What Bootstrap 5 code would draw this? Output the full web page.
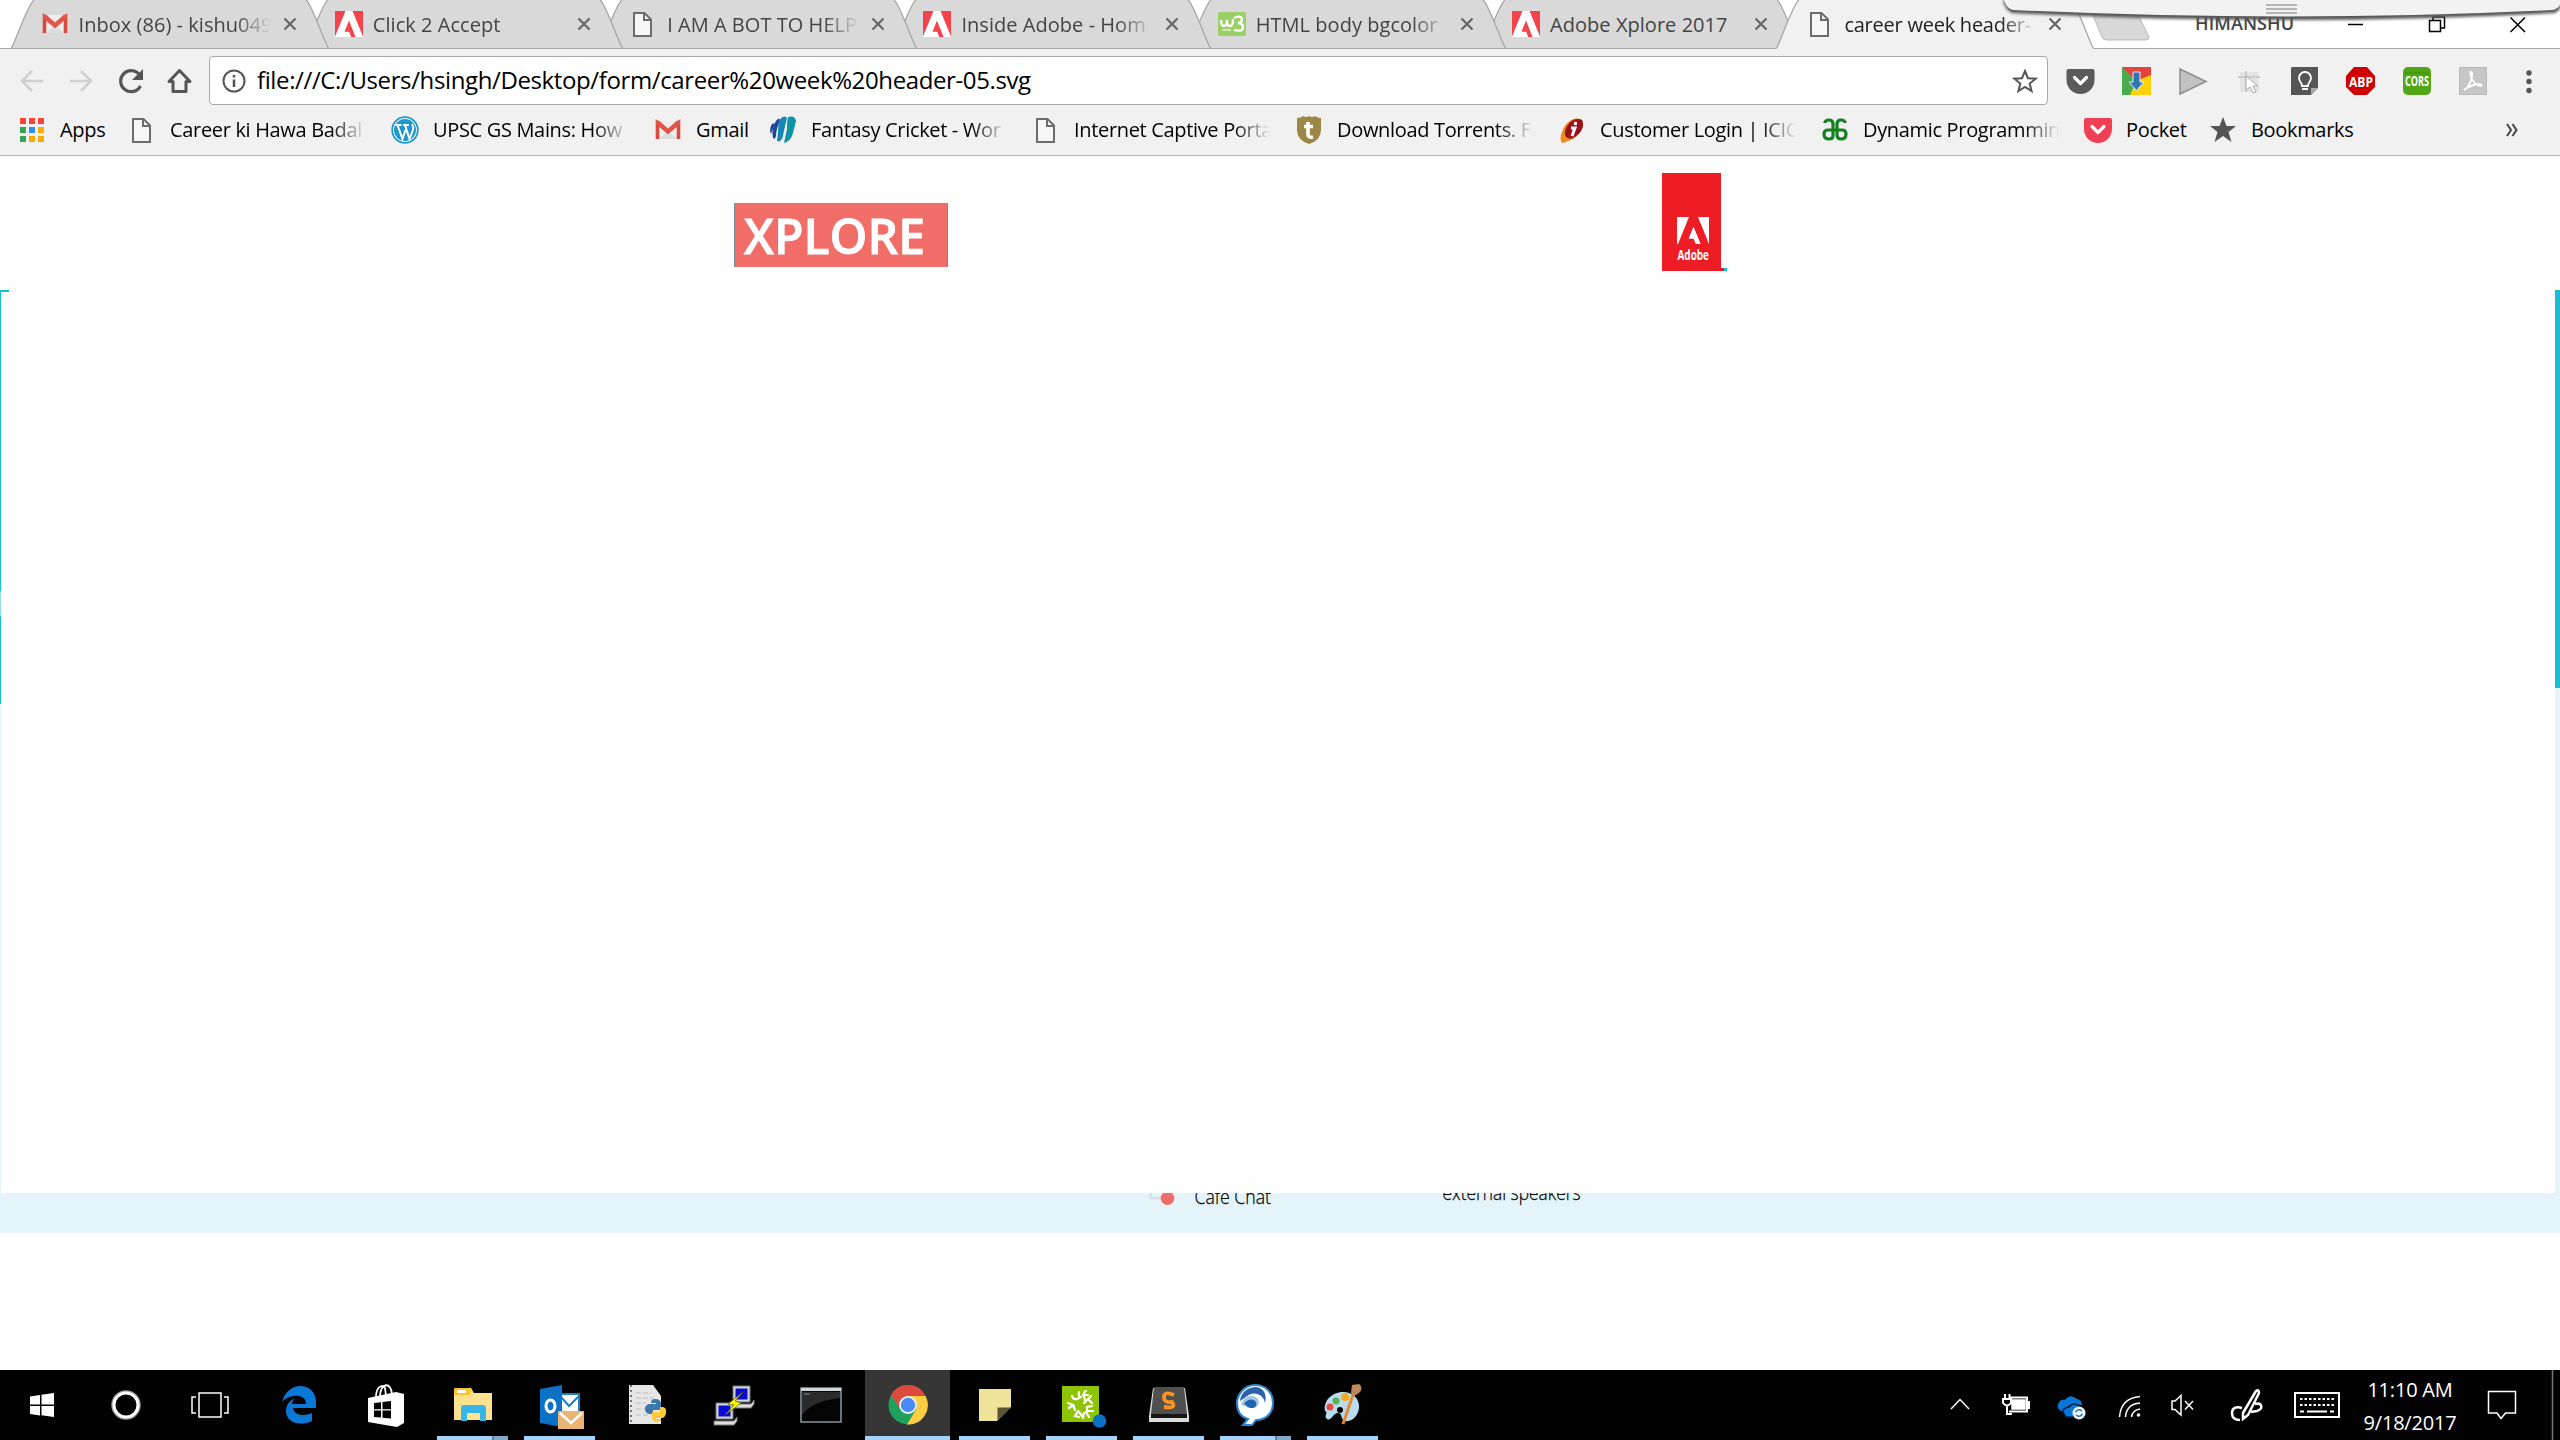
<!DOCTYPE html>
<html lang="en">
<head>
<meta charset="utf-8">
<title>career week header-05.svg</title>
<link rel="stylesheet" href="https://cdn.jsdelivr.net/npm/bootstrap@5.3.0/dist/css/bootstrap.min.css">
<style>
body{width:2560px;height:1440px;overflow:hidden;font-family:"Open Sans","Noto Sans",sans-serif;font-size:20px;line-height:28px;color:#000;background:#fefefe}
svg{display:block;flex:none}
.strip{height:48px;padding-left:10.500px;background:#fff;position:relative}
.tb{width:318px;height:48px;margin-right:-23.7px;padding:0 29px 0 30px;position:relative;color:#444;letter-spacing:.04px;z-index:1}
.tb>*{position:relative}
.tb>.shape{position:absolute;left:0;top:0}
.tb:nth-child(1){z-index:7}
.tb:nth-child(2){z-index:6}
.tb:nth-child(3){z-index:5}
.tb:nth-child(4){z-index:4}
.tb:nth-child(5){z-index:3}
.tb:nth-child(6){z-index:2}
.tb.on{color:#222;z-index:8;letter-spacing:-.24px}
.ticon{width:28px;height:28px;margin-right:10px}
.fade-txt{white-space:nowrap;overflow:hidden;-webkit-mask-image:linear-gradient(90deg,#000 calc(100% - 36px),transparent);mask-image:linear-gradient(90deg,#000 calc(100% - 36px),transparent)}
.tb .tt{width:192px;margin-right:12px;padding-top:1px}
.tb .tt,.bm .bt{flex:none}
.user{position:absolute;left:2195px;top:11px;font-size:18px;line-height:24px;font-weight:600;color:#444;letter-spacing:.1px}
.wbtn{position:absolute;left:2340px;top:10px}
.newtab{position:absolute;left:2088px;top:0}
.pull{position:absolute;left:2000px;top:0;z-index:9}
.tools{height:108px;background:#f1f1f1;border-top:1px solid #a9a9a9;border-bottom:1px solid #b3b3b3}
.nav-row{height:63px;padding:0 0 0 18px}
.omni{width:1839px;height:49px;border:1.5px solid #a9a9a9;border-radius:4px;background:#fff;padding-left:12px;padding-right:9px;margin-left:15px}
.url{font-size:24px;letter-spacing:-.38px;margin-left:11px;line-height:32px;padding-bottom:1px}
.bm-row{height:36px;padding-left:18px}
.bm{letter-spacing:-.33px;flex:none}
.bm .bi{width:28px;height:28px;margin-right:14px}
.bm.full{width:263px}
.bm.full .bt{width:196px}
.w-apps{width:110px}
.w-gmail{width:115px}
.w-pocket{width:125px}
.more{margin-right:41px}
.art{height:1214px}
.task{height:70px;background:#020202;color:#fff}
.slot{width:84px;height:70px;display:flex;align-items:center;justify-content:center;position:relative;flex:none}
.app{width:87px;padding-right:2px}
.app.run::after{content:"";position:absolute;left:7px;bottom:0;width:71px;height:4px;background:#a3d3fd}
.app.multi::after{background:linear-gradient(90deg,#a3d3fd 55px,#5f7f9c 55px,#5f7f9c 57px,#84a8c8 57px)}
.app.cur{background:linear-gradient(90deg,#363636 85px,transparent 85px)}
.app.cur::after{left:0;width:85px}
.clock{font-size:20px;line-height:33px;letter-spacing:-.2px;width:116px;margin-left:-8px;padding-top:3px}
</style>
<script src="https://cdn.jsdelivr.net/npm/bootstrap@5.3.0/dist/js/bootstrap.bundle.min.js"></script>
</head>
<body>
<svg width="0" height="0" class="position-absolute">
<symbol id="tab" viewBox="0 0 318 48"><path d="M0 48C5 42 17 4 23 0H295C301 4 313 42 318 48Z" fill="#d9d9d9"/><path d="M.5 48C5 40 17 4 23 0M295 0C301 4 313 42 317.500 48" fill="none" stroke="#a6a6a6" stroke-width="1.300"/></symbol>
<symbol id="tabon" viewBox="0 0 318 49"><path d="M0 49C5 42 17 4 23 0H295C301 4 313 42 318 49Z" fill="#f1f1f1"/><path d="M.5 48.500C5 40 17 4 23 0M295 0C301 4 313 42 317.500 48.500" fill="none" stroke="#a6a6a6" stroke-width="1.300"/></symbol>
<symbol id="gm" viewBox="0 0 28 28"><path d="M2 5h24v18H2z" fill="#eee"/><path d="M5 23l9-8 9 8z" fill="#ddd"/><path d="M3.500 23V7L14 16 24.500 7v16" fill="none" stroke="#d9493c" stroke-width="3.600"/><path d="M2 5l3-.5 9 8 9-8 3 .5v3L14 18 2 8z" fill="#e0564a"/></symbol>
<symbol id="ad" viewBox="0 0 28 26"><path d="M0 0h28v26H0z" fill="#fff"/><path d="M0 0h10.500L0 25.500zM17.500 0H28v25.500zM14 9.500L20.500 26h-4.300l-2-5.300H9.500z" fill="#f4434a"/></symbol>
<symbol id="pg" viewBox="0 0 28 28"><path d="M5 3h10.500L22 9.500V26H5z" fill="#f6f6f6" stroke="#6c6c6c" stroke-width="2"/><path d="M15 3v7h7" fill="none" stroke="#6c6c6c" stroke-width="2"/></symbol>
<symbol id="x" viewBox="0 0 14 14"><path d="M1.500 1.500l11 11M12.500 1.500l-11 11" stroke="#666" stroke-width="2.200"/></symbol>
<symbol id="pocket" viewBox="0 0 28 25"><path d="M2 0h24q2 0 2 2v9a14 14 0 0 1-28 0V2q0-2 2-2z" fill="currentColor"/><path d="M8 8.500l6 6 6-6" fill="none" stroke="#fff" stroke-width="3.200" stroke-linecap="round" stroke-linejoin="round"/></symbol>
</svg>

<header>
<div class="strip d-flex">
 <div class="tb d-flex align-items-center"><svg class="shape" width="318" height="48"><use href="#tab"/></svg><svg class="ticon"><use href="#gm"/></svg><span class="tt fade-txt">Inbox (86) - kishu0493</span><svg width="14" height="14"><use href="#x"/></svg></div>
 <div class="tb d-flex align-items-center"><svg class="shape" width="318" height="48"><use href="#tab"/></svg><svg class="ticon"><use href="#ad" width="28" height="26" y="1"/></svg><span class="tt fade-txt">Click 2 Accept</span><svg width="14" height="14"><use href="#x"/></svg></div>
 <div class="tb d-flex align-items-center"><svg class="shape" width="318" height="48"><use href="#tab"/></svg><svg class="ticon"><use href="#pg"/></svg><span class="tt fade-txt">I AM A BOT TO HELP</span><svg width="14" height="14"><use href="#x"/></svg></div>
 <div class="tb d-flex align-items-center"><svg class="shape" width="318" height="48"><use href="#tab"/></svg><svg class="ticon"><use href="#ad" width="28" height="26" y="1"/></svg><span class="tt fade-txt">Inside Adobe - Hom</span><svg width="14" height="14"><use href="#x"/></svg></div>
 <div class="tb d-flex align-items-center"><svg class="shape" width="318" height="48"><use href="#tab"/></svg><svg class="ticon" viewBox="0 0 28 28"><rect y="2" width="28" height="24" rx="2" fill="#9bd067"/><path d="M3 10q0 6 3 6t3-6q0 6 3 6t3-7M16 8q7-3 8 1 0 4-4 4 5 0 5 4.500T16 20" fill="none" stroke="#fff" stroke-width="2.300"/><path d="M4 20h9" stroke="#dff2cc" stroke-width="1.500"/></svg><span class="tt fade-txt">HTML body bgcolor</span><svg width="14" height="14"><use href="#x"/></svg></div>
 <div class="tb d-flex align-items-center"><svg class="shape" width="318" height="48"><use href="#tab"/></svg><svg class="ticon"><use href="#ad" width="28" height="26" y="1"/></svg><span class="tt">Adobe Xplore 2017</span><svg width="14" height="14"><use href="#x"/></svg></div>
 <div class="tb on d-flex align-items-center"><svg class="shape" width="318" height="49"><use href="#tabon"/></svg><svg class="ticon"><use href="#pg"/></svg><span class="tt fade-txt">career week header-</span><svg width="14" height="14"><use href="#x"/></svg></div>
 <svg class="newtab" width="64" height="42"><path d="M2 8H47L61 37q0 3-3 3H19q-4 0-5-3z" fill="#d8d8d8" stroke="#bbb"/></svg>
 <span class="user">HIMANSHU</span>
 <svg class="wbtn" width="200" height="28" fill="none" stroke="#000" stroke-width="1.500"><path d="M8 14.500h15M89.500 10.500h11v11h-11zM93 10V7h11.500v11H101M170.500 7.500l14.500 14.500M185 7.500l-14.500 14.500"/></svg>
 <svg class="pull" width="560" height="28"><defs><filter id="soft" x="-5%" y="-50%" width="110%" height="200%"><feGaussianBlur stdDeviation="1.500"/></filter></defs><path d="M3 0Q5 10 12 13Q290 27 555 13L560 9V0Z" fill="#555" filter="url(#soft)"/><path d="M4 0Q6 8 13 10Q290 23 553 10Q559 8 560 4V0Z" fill="#f2f2f2"/><path d="M266 5h31M266 9h31M266 13h31" stroke="#b5b5b5" stroke-width="2"/></svg>
</div>
<div class="tools">
 <div class="nav-row d-flex align-items-center">
  <svg width="176" height="32" fill="none"><g stroke="#d0d0d0" stroke-width="2.500"><path d="M14 6L4 16l10 10M4 16h21M63 6l10 10-10 10M73 16H52"/></g><path d="M122 10.500A10.500 10.500 0 1 0 122.500 21" stroke="#555" stroke-width="3.200"/><path d="M125 4v11h-11z" fill="#555"/><path d="M161.500 5.500L172 16.500H168V26.500H155V16.500H151Z" stroke="#555" stroke-width="3" stroke-linejoin="round"/></svg>
  <div class="omni d-flex align-items-center"><svg width="24" height="24"><circle cx="12" cy="12" r="10.500" fill="none" stroke="#555" stroke-width="2"/><path d="M12 10.500V18M12 6v2.600" stroke="#555" stroke-width="2.500"/></svg><span class="url">file:///C:/Users/hsingh/Desktop/form/career%20week%20header-05.svg</span><svg class="ms-auto" width="26" height="26"><path d="M13 3l3 7.200 7.600.5-5.900 4.800 1.900 7.500L13 18.900 6.400 23l1.900-7.500L2.400 10.700l7.600-.5z" fill="none" stroke="#555" stroke-width="2"/></svg></div>
  <svg width="490" height="40" class="ms-2" viewBox="2056 0 490 40"><svg x="2066" y="8" width="29" height="25" color="#5b5b5b"><use href="#pocket"/></svg>
   <path d="M2122 6h29v11l-15 3z" fill="#e8423f"/><path d="M2122 6l14 14-4 14h-10z" fill="#48ab4c"/><path d="M2151 12v22h-21l7-15z" fill="#fdd20a"/><path d="M2122 6h29v8l-15 6z" fill="#e8423f"/><path d="M2133 11h7v10h4l-7.500 8.500-7.500-8.500h4z" fill="#2f76b8" stroke="#e8eef4"/>
   <path d="M2180 8l26 12.500L2180 33z" fill="#c2c2c2" stroke="#8e8e8e" stroke-width="1.500"/>
   <path d="M2240 11h19v20h-19z" fill="#e4e4e4"/><path d="M2238 16h22M2246 10v21" stroke="#ccc" stroke-width="2"/><path d="M2246 15l12 10h-5l3 6-3 1-3-6-4 3z" fill="#fff" stroke="#aaa"/>
   <path d="M2292 6h26v21l-7 7h-20V7z" fill="#555"/><path d="M2318 27h-7v7z" fill="#aaa"/><path d="M2302 25c0-4-3-4-3-8a6 6 0 0 1 12 0c0 4-3 4-3 8zM2302 28h6" fill="none" stroke="#fff" stroke-width="1.800"/>
   <path d="M2354 6h13l8 9v11l-8 8h-13l-8-8V15z" fill="#d00000"/><text x="2349" y="26" font-size="15" font-weight="700" fill="#fff" textLength="24" lengthAdjust="spacingAndGlyphs">ABP</text>
   <rect x="2403" y="6" width="28" height="28" rx="5" fill="#50a616"/><path d="M2405 12h24" stroke="#3d8e0c"/><text x="2405" y="25" font-size="14" font-weight="700" fill="#fff" textLength="24" lengthAdjust="spacingAndGlyphs">CORS</text>
   <path d="M2459.500 6.500h27v27h-27z" fill="#c6c6c6" stroke="#b8b8b8"/><path d="M2464 29c3-1 9-10 8-17-1-3-3 0-1 4 2 5 6 9 10 9 3-2-6-4-17 4z" fill="none" stroke="#fff" stroke-width="1.800"/>
   <g fill="#555"><circle cx="2529" cy="12" r="2.700"/><circle cx="2529" cy="20.500" r="2.700"/><circle cx="2529" cy="29.500" r="2.700"/></g></svg>
 </div>
 <div class="bm-row d-flex align-items-center">
  <div class="bm w-apps d-flex align-items-center"><svg class="bi"><g fill="#fb4236"><path d="M2 2h6v6H2zM11 2h6v6h-6zM20 2h6v6h-6z"/></g><path d="M2 11h6v6H2z" fill="#34a352"/><path d="M11 11h6v6h-6z" fill="#2d8cff"/><path d="M20 11h6v6h-6zM11 20h6v6h-6zM20 20h6v6h-6z" fill="#fba905"/><path d="M2 20h6v6H2z" fill="#34a352"/></svg><span>Apps</span></div>
  <div class="bm full d-flex align-items-center"><svg class="bi"><use href="#pg"/></svg><span class="bt fade-txt">Career ki Hawa Badal</span></div>
  <div class="bm full d-flex align-items-center"><svg class="bi"><circle cx="14" cy="14" r="12.800" fill="#fff" stroke="#1d98cc" stroke-width="1.800"/><circle cx="14" cy="14" r="11" fill="#1d98cc"/><path d="M4.500 9h6M6.500 9l5 14L14.500 14M12 9h6M14 9l4.500 14L22 14q1-3-1-6" fill="none" stroke="#fff" stroke-width="2"/></svg><span class="bt fade-txt">UPSC GS Mains: How</span></div>
  <div class="bm w-gmail d-flex align-items-center"><svg class="bi"><use href="#gm"/></svg><span>Gmail</span></div>
  <div class="bm full d-flex align-items-center"><svg class="bi"><path d="M19 1Q26-1 27 5L24 17Q22 25 15 27L18 13Q18 5 19 1z" fill="#0f93a8"/><path d="M12 2Q16-1 18 2Q15 14 14 20Q12 27 8 25L9 16Q9 6 12 2z" fill="#1687b4"/><path d="M7 5Q10 1 11 4Q7 14 7 20Q6 24 4 22Q2 12 7 5z" fill="#19469b"/><path d="M3 8Q5 6 5 9L2 18Q0 13 3 8z" fill="#1c3f94"/></svg><span class="bt fade-txt">Fantasy Cricket - Wor</span></div>
  <div class="bm full d-flex align-items-center"><svg class="bi"><use href="#pg"/></svg><span class="bt fade-txt">Internet Captive Porta</span></div>
  <div class="bm full d-flex align-items-center"><svg class="bi"><path d="M2 2q4 0 6-2 3 2 6 0 3 2 6 0 2 2 6 2v12q0 10-12 14Q2 24 2 14z" fill="#9c8747"/><path d="M13 6v12q0 4 5 3M9 10.500h9" fill="none" stroke="#fff" stroke-width="3.600"/></svg><span class="bt fade-txt">Download Torrents. Fa</span></div>
  <div class="bm full d-flex align-items-center"><svg class="bi"><path d="M4 16C8 4 18 0 24 4c3 6-1 14-9 19L5 27C2 26 2 21 4 16z" fill="#f08a1c"/><path d="M7 15C10 5 18 1 24 4c3 6-1 14-9 18-5 2-9-1-8-7z" fill="#9a1118"/><path d="M18 6l-1 3M13 12h4l-3 8" stroke="#fff" stroke-width="3" fill="none"/></svg><span class="bt fade-txt">Customer Login | ICIC</span></div>
  <div class="bm full d-flex align-items-center"><svg class="bi"><path d="M4 7q0-3 4-3 4 0 4 4v12q0 3-4 3-5 0-5-5 0-4 4-4h14q4 0 4 4 0 5-5 5-4 0-4-4V8q0-4 4-4 4 0 4 3" fill="none" stroke="#15801f" stroke-width="3.200"/></svg><span class="bt fade-txt">Dynamic Programmin</span></div>
  <div class="bm w-pocket d-flex align-items-center"><svg class="bi" color="#ef4056"><use href="#pocket" width="28" height="25" y="2"/></svg><span>Pocket</span></div>
  <div class="bm d-flex align-items-center"><svg class="bi"><path d="M14 1l3.500 9H27l-7.500 6 3 10L14 20l-8.500 6 3-10L1 10h9.500z" fill="#555"/></svg><span>Bookmarks</span></div>
  <svg width="14" height="14" class="ms-auto more"><path d="M2 1l4 6-4 6M7.500 1l4 6-4 6" fill="none" stroke="#444" stroke-width="2"/></svg>
 </div>
</div>
</header>

<main class="art">
<svg width="2560" height="1214" viewBox="0 156 2560 1214">
 <clipPath id="band"><path d="M0 1193h2560v40H0z"/></clipPath>
 <path d="M734 203h214v64H734z" fill="#f16e68"/><path d="M734.500 203v64" stroke="#7b8f9b"/><path d="M947.500 203v64" stroke="#38a5bc"/>
 <text x="744" y="254" font-size="48.500" font-weight="600" fill="#fff" stroke="#fff" stroke-width=".8" textLength="181" lengthAdjust="spacingAndGlyphs">XPLORE</text>
 <path d="M1662 173h59v95h3v3h-62z" fill="#ee1c25"/><path d="M1724 268h3v3h-3z" fill="#13c0d6"/>
 <path d="M1677 217h32v27h-32z" fill="#fff"/><path d="M1689 217h9l11 27h-8.500l-7-17-4.500 11.500h5l2.200 5.500H1678z" fill="#ee1c25"/><path d="M1693.500 227l7 17h-4.700l-2.200-5.500h-5z" fill="#fff"/>
 <text x="1677.500" y="259.500" font-size="13.500" font-weight="700" fill="#fff" textLength="31.500" lengthAdjust="spacingAndGlyphs">Adobe</text>
 <path d="M0 290h9v2H1v412H0z" fill="#17bdd2"/><path d="M0 591h1v25H0z" fill="#8edfe9"/><path d="M0 704h1v489H0z" fill="#e5f4fa"/>
 <path d="M2555 290h5v398h-5z" fill="#17bdd2"/><path d="M2555 688h5v505h-5z" fill="#e5f4fa"/>
 <path d="M0 1193h2560v40H0z" fill="#e5f4fa"/>
 <g clip-path="url(#band)"><path d="M1150.500 1190v8h14" fill="none" stroke="#d5e3ea" stroke-width="3"/><circle cx="1167.500" cy="1198.300" r="6.800" fill="#f16e68"/>
 <text x="1194.500" y="1203.500" font-size="19.500" font-weight="300" fill="#000" stroke="#000" stroke-width=".25" textLength="76.500" lengthAdjust="spacingAndGlyphs">Cafe Chat</text>
 <text x="1442.500" y="1200" font-size="19.500" font-weight="300" fill="#000" stroke="#000" stroke-width=".25" textLength="138" lengthAdjust="spacingAndGlyphs">external speakers</text></g>
</svg>
</main>

<footer class="task d-flex">
 <div class="slot"><svg width="24" height="24" fill="#fff"><path d="M0 3.500L10 2v9.500H0zM11.500 1.800L24 0v11.500H11.500zM0 13h10v9.500L0 21zM11.500 13H24v11l-12.500-1.800z"/></svg></div>
 <div class="slot"><svg width="32" height="32"><circle cx="16" cy="16" r="13.500" fill="none" stroke="#999" stroke-width="2.500"/><circle cx="16" cy="16" r="12" fill="none" stroke="#fff" stroke-width="3"/></svg></div>
 <div class="slot"><svg width="38" height="28" fill="none" stroke="#fff" stroke-width="1.500"><path d="M8 2h22v24H8zM5 6H1v16h4M33 6h4v16h-4"/></svg></div>
 <div class="slot app ms-1"><svg width="36" height="38"><path d="M1 16C4 5 12 0 19 0c10 0 16 7 16 16v6H12c1 7 10 9 19 5v8C18 41 5 36 5 25c0-6 4-11 9-13-2 2-3 4-3 6h14c0-11-17-10-24-2z" fill="#0a78d7"/></svg></div>
 <div class="slot app"><svg width="38" height="43"><path d="M9 13C9 2 16 0 18 4l1 8M13 12C14-2 24-2 25 10" fill="none" stroke="#fff" stroke-width="1.800"/><path d="M1 14l28-6 8 2v29l-7 4L1 38z" fill="#fff"/><path d="M7 19l7-.8v7H7zM15.500 18l8.500-1v8.200h-8.500zM7 26.500h7v7L7 33zM15.500 26.500H24v8l-8.500-.8z" fill="#000"/></svg></div>
 <div class="slot app run multi"><svg width="38" height="34"><path d="M0 2q0-2 2-2h15l3 5h18v27H0z" fill="#ffe28f"/><path d="M0 2q0-2 2-2h13l3 3-3 4H0z" fill="#fcc52b"/><path d="M3 2h9v3H3z" fill="#fff"/><path d="M7 33V20q0-3 3-3h19q3 0 3 3v13h-6v-8H13v8z" fill="#37b4e8"/></svg></div>
 <div class="slot app run"><svg width="46" height="44" class="ms-1 mt-1"><path d="M22 9h18v24H22z" fill="#fff" stroke="#1a7fcc" stroke-width="2"/><path d="M22 12l8 9 10-10" fill="none" stroke="#1a7fcc" stroke-width="2"/><path d="M1 4l22-4v42L1 38z" fill="#0b72c6"/><ellipse cx="11.500" cy="21" rx="4.500" ry="6" fill="none" stroke="#fff" stroke-width="3"/><path d="M19 26h26v18H19z" fill="#ebb475"/><path d="M21 28l11 10 11-10" fill="none" stroke="#fff" stroke-width="2.500"/></svg></div>
 <div class="slot app"><svg width="40" height="40"><path d="M2 0h24l8 11v28H2z" fill="#e6e6e6"/><path d="M4 0v40" stroke="#777" stroke-width="2" stroke-dasharray="2 3"/><path d="M9 8h15M9 13h18M9 18h9M9 24h9M9 30h12" stroke="#bbb" stroke-dasharray="5 2"/><path d="M28 14q6 0 6 5v6h-8v4h-4q-4-1-4-5t4-5h7v-1h-5q0-4 4-4z" fill="#3a78ab"/><path d="M31 37q-6 0-6-4v-6h8v-5h3q4 1 3 6t-4 5h-6v1h5q0 3-3 3z" fill="#fbcb3b"/></svg></div>
 <div class="slot app"><svg width="42" height="42"><g id="pc"><path d="M20 2h17v16H20z" fill="#d6d6d6" stroke="#777"/><path d="M22.500 4.500h12v11h-12z" fill="#0a0ad8"/><path d="M18 20h20l3-4v4l-3 4H18z" fill="#ddd" stroke="#777"/></g><use href="#pc" x="-17" y="17"/><path d="M30 8L15 20l6 1-9 10 16-12-6-2z" fill="#ff0" stroke="#660" stroke-width=".8"/></svg></div>
 <div class="slot app"><svg width="42" height="36"><path d="M1 1h40v34H1z" fill="#050505" stroke="#8f989f" stroke-width="1.500"/><path d="M2 5h38v6Q12 14 2 28z" fill="#2b2b2b"/><path d="M1 2.500h40" stroke="#cfd6da" stroke-width="3"/><path d="M4 7h6" stroke="#888"/></svg></div>
 <div class="slot app run cur"><svg width="40" height="40"><circle cx="20" cy="20" r="19.500" fill="#1fa15e"/><path d="M3 10A19.500 19.500 0 0 1 37.500 11H20a9 9 0 0 0-8.500 12z" fill="#dd4a3e"/><path d="M20 11h17.500A19.500 19.500 0 0 1 19 39.500L28 24.500Q31 15 20 11z" fill="#ffcd40"/><circle cx="20" cy="20" r="9" fill="#f1f1f1"/><circle cx="20" cy="20" r="7.200" fill="#4a8af4"/></svg></div>
 <div class="slot app run"><svg width="32" height="32"><path d="M0 0h32v18L18 32H0z" fill="#f0e49a"/><path d="M18.500 18.500H32L18.500 32z" fill="#5a5432"/></svg></div>
 <div class="slot app run"><svg width="46" height="42" class="mt-1 ms-1"><path d="M1 0h37v36H1z" fill="#8fc400"/><path d="M11 10q1 4 5 3M16 13l4-2M18 6q-1 5 2 5M25 5q-3 1-2 5l1 5M22 9h5M30 10l-3 3 4 4M27 13l-4 4M31 20l-5 1v4M32 25h-6M28 31l-3-5M23 27l-1 5M17 25l-3 5 4 1M18 26l3 4M7 17l5 2-4 3M12 19l2 5" fill="none" stroke="#fff" stroke-width="2.200" stroke-linecap="round"/><circle cx="38.500" cy="35" r="6.800" fill="#0a72c4"/></svg></div>
 <div class="slot app run"><svg width="40" height="36"><path d="M4 1h32l4 28v6H0v-6z" fill="#dcdcdc"/><path d="M5 0h30l3 27H2z" fill="#505050"/><path d="M2 27h36v4H2z" fill="#151515"/><path d="M25 8Q15 4 15 10t8 5q5 7-8 5" fill="none" stroke="#ff9420" stroke-width="3.800"/></svg></div>
 <div class="slot app run multi"><svg width="40" height="42"><path d="M19 1c11 0 18 8 18 18S30 36 20 36l-4 5H7l5-6C5 33 1 27 1 19S8 1 19 1z" fill="#fff" stroke="#2a86d0" stroke-width="2"/><path d="M4 17C5 8 12 3 20 3c9 1 11 9 9 16-1-7-8-11-14-9-5 2-7 5-11 7z" fill="#2b61ad"/><path d="M5 21c2-9 12-12 17-6 2 4 0 8-4 9-7 1-9-3-13-3z" fill="#9cc4e6"/><path d="M8 20c3-5 9-6 12-2 1 4-1 6-5 6-3 0-4-3-7-4z" fill="#1f62b0"/></svg></div>
 <div class="slot app run"><svg width="40" height="42"><path d="M20 8C30 8 37 15 36 24S28 38 22 37c-5-1-2-8-7-8S8 38 4 35 6 28 2 27C0 17 9 8 20 8z" fill="#b7dcf0"/><circle cx="17" cy="26" r="3" fill="#050505"/><circle cx="7" cy="23" r="3.500" fill="#e84b3d"/><circle cx="13" cy="17" r="3.500" fill="#58b04f"/><circle cx="22" cy="13" r="4" fill="#f7a81b"/><path d="M31 8L20 40" stroke="#e8872e" stroke-width="3"/><path d="M29 1l7-1q5 4 0 9l-5 3-3-3z" fill="#b9895c"/></svg></div>

 <svg class="ms-auto" width="420" height="70" viewBox="1940 1370 420 70" fill="none" stroke="#fff" stroke-width="1.500">
  <path d="M1951 1409l9-9.500 9 9.500"/>
  <path d="M2010 1397.500h17v14h-18M2029 1401v8" stroke-width="2"/><path d="M2012 1400h13v9h-13z" fill="#fff"/><path d="M2005 1394v5M2009.500 1394v5M2003 1399h8v4q-4 5-8 0zM2007 1405v9h5" stroke-width="2"/>
  <g stroke="none"><path d="M2061 1411q-6-4-1-10 2-2 5-1 5-7 12-1 5 1 5 6l-9-1q-8 1-7 8z" fill="#0a76d8"/><path d="M2064 1414q-3-6 5-7 5-6 11 0 6 1 5 8l-10 2h-9z" fill="#0a76d8" stroke="#02204a"/><circle cx="2079" cy="1413" r="6.500" fill="#eef3f8"/></g><path d="M2075.500 1412q3-4 6.500-1M2082.500 1414q-3 4-6.500 1" stroke="#2d74c0"/>
  <path d="M2119.500 1417Q2121 1398 2140 1396.500M2125.500 1417q1-13 14.500-14M2131.500 1417q1-7 8.500-8"/><circle cx="2138.500" cy="1415" r="1.800" fill="#fff" stroke="none"/>
  <path d="M2172 1401h3l6-5.500v19.500l-6-5.500h-3zM2185 1401l8 8.500M2193 1401l-8 8.500"/>
  <path d="M2243 1413l13-22q3-2 3 2l-11 22-5 4zM2242 1408c-6-2-10 0-10 5 0 6 4 7 8 7M2255 1404c7-2 9 5 2 7l-6 1" stroke-width="2.500"/>
  <path d="M2295 1393h44v24h-44z" stroke-width="2"/><path d="M2300 1399h35M2300 1405h35" stroke-width="2.200" stroke-dasharray="2.500 2"/><path d="M2300 1411.500h4M2307 1411.500h20M2330 1411.500h4" stroke-width="2.200"/>
 </svg>
 <div class="clock text-center">11:10 AM<br>9/18/2017</div>
 <svg width="92" height="70" viewBox="2468 1370 92 70" fill="none" stroke="#fff" stroke-width="1.500"><path d="M2488.500 1391.500h27v21.500h-10l-4.500 5.500-4-5.500h-8.500z"/><path d="M2552.500 1370v70" stroke="#777"/></svg>
</footer>
</body>
</html>
